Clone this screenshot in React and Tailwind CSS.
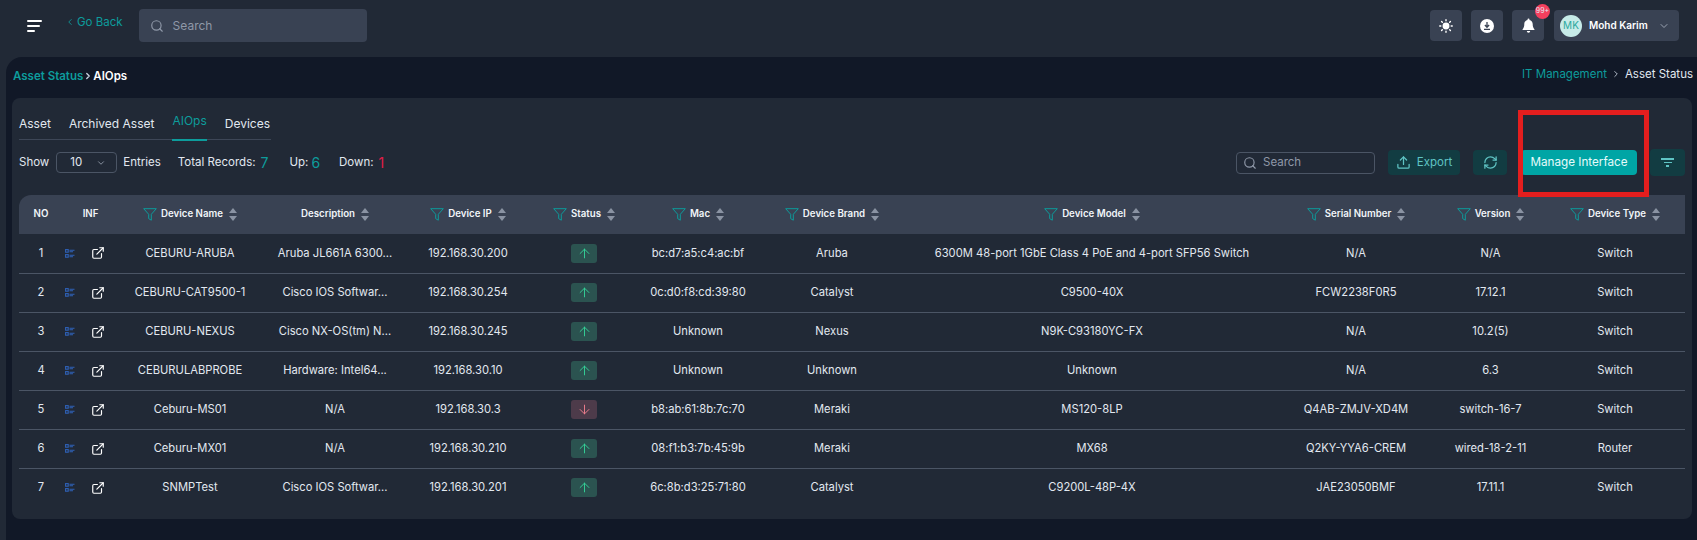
import { useState } from 'react';
import { ChevronDown, ChevronLeft, ChevronRight, Search, Upload, RefreshCw, ExternalLink, ArrowUp, ArrowDown } from 'lucide-react';

const columns = [
  { label: 'NO', w: 'w-[44px]' },
  { label: 'INF', w: 'w-[55px]' },
  { label: 'Device Name', w: 'w-[144px]', filter: true, sort: true },
  { label: 'Description', w: 'w-[146px]', sort: true },
  { label: 'Device IP', w: 'w-[120px]', filter: true, sort: true },
  { label: 'Status', w: 'w-[112px]', filter: true, sort: true },
  { label: 'Mac', w: 'w-[116px]', filter: true, sort: true },
  { label: 'Device Brand', w: 'w-[152px]', filter: true, sort: true },
  { label: 'Device Model', w: 'w-[368px]', filter: true, sort: true },
  { label: 'Serial Number', w: 'w-[160px]', filter: true, sort: true },
  { label: 'Version', w: 'w-[109px]', filter: true, sort: true },
  { label: 'Device Type', w: 'w-[140px]', filter: true, sort: true },
];

const devices = [
  ['CEBURU-ARUBA', 'Aruba JL661A 6300...', '192.168.30.200', true, 'bc:d7:a5:c4:ac:bf', 'Aruba', '6300M 48-port 1GbE Class 4 PoE and 4-port SFP56 Switch', 'N/A', 'N/A', 'Switch'],
  ['CEBURU-CAT9500-1', 'Cisco IOS Softwar...', '192.168.30.254', true, '0c:d0:f8:cd:39:80', 'Catalyst', 'C9500-40X', 'FCW2238F0R5', '17.12.1', 'Switch'],
  ['CEBURU-NEXUS', 'Cisco NX-OS(tm) N...', '192.168.30.245', true, 'Unknown', 'Nexus', 'N9K-C93180YC-FX', 'N/A', '10.2(5)', 'Switch'],
  ['CEBURULABPROBE', 'Hardware: Intel64...', '192.168.30.10', true, 'Unknown', 'Unknown', 'Unknown', 'N/A', '6.3', 'Switch'],
  ['Ceburu-MS01', 'N/A', '192.168.30.3', false, 'b8:ab:61:8b:7c:70', 'Meraki', 'MS120-8LP', 'Q4AB-ZMJV-XD4M', 'switch-16-7', 'Switch'],
  ['Ceburu-MX01', 'N/A', '192.168.30.210', true, '08:f1:b3:7b:45:9b', 'Meraki', 'MX68', 'Q2KY-YYA6-CREM', 'wired-18-2-11', 'Router'],
  ['SNMPTest', 'Cisco IOS Softwar...', '192.168.30.201', true, '6c:8b:d3:25:71:80', 'Catalyst', 'C9200L-48P-4X', 'JAE23050BMF', '17.11.1', 'Switch'],
];

function FunnelIcon() {
  return (
    <svg width="14" height="13" viewBox="0 0 14 13" fill="none" stroke="#0d9c9c" strokeWidth="1" className="shrink-0">
      <path d="M0.7 0.7h12.6L8.300 6.300v5.900L5.700 10.600V6.300z" strokeLinejoin="round" />
    </svg>
  );
}

function SortIcon() {
  return (
    <svg width="8" height="13" viewBox="0 0 8 13" fill="#8a93a3" className="ml-[2px] shrink-0">
      <path d="M4 0l4 5H0z" />
      <path d="M4 13L0 8h8z" />
    </svg>
  );
}

function ListIcon() {
  return (
    <svg width="10" height="9" viewBox="0 0 10 9" fill="none" stroke="#2f62b8" strokeWidth="1.1">
      <rect x="0.6" y="0.6" width="2.6" height="2.6" />
      <rect x="0.6" y="5.6" width="2.6" height="2.6" />
      <path d="M4.500 1.200h5M4.500 2.800h3.500M4.500 6.200h5M4.500 7.800h3.500" />
    </svg>
  );
}

function SunIcon() {
  return (
    <svg width="14" height="14" viewBox="0 0 13 13" fill="#fff" stroke="#fff" strokeWidth="1.3" strokeLinecap="round">
      <circle cx="6.500" cy="6.500" r="3.200" stroke="none" />
      <path d="M6.500 0.700v1M6.500 11.300v1M0.700 6.500h1M11.300 6.500h1M2.400 2.400l.7.7M9.900 9.900l.7.7M2.400 10.600l.7-.7M9.900 3.100l.7-.7" />
    </svg>
  );
}

function DownloadIcon() {
  return (
    <svg width="14" height="14" viewBox="0 0 14 14">
      <circle cx="7" cy="7" r="7" fill="#fff" />
      <path d="M7 3v5M4.900 6l2.100 2.200L9.100 6M4 10.300h6" fill="none" stroke="#394253" strokeWidth="1.300" />
    </svg>
  );
}

function BellIcon() {
  return (
    <svg width="13" height="15" viewBox="0 0 13 15" fill="#fff">
      <path d="M6.500 0.500a1 1 0 0 1 1 1v.4c2 .5 3.200 2.200 3.200 4.200 0 2.600.5 3.900 1.800 5.300v.6H.500v-.6c1.300-1.400 1.800-2.700 1.800-5.300 0-2 1.200-3.700 3.200-4.200v-.4a1 1 0 0 1 1-1z" />
      <path d="M4.800 13h3.400a1.700 1.700 0 0 1-3.400 0z" />
    </svg>
  );
}

function App() {
  const [activeTab, setActiveTab] = useState('AIOps');
  const tabs = ['Asset', 'Archived Asset', 'AIOps', 'Devices'];

  return (
    <div className="relative h-[540px] w-[1697px] overflow-hidden bg-[#212936] font-['Inter',sans-serif] text-[#e2e8f0]">
      {/* Top bar */}
      <header className="flex h-[57px] items-start">
        <button className="ml-[27px] mt-[20px] flex w-[16px] flex-col gap-[3px]">
          <span className="h-[2px] w-[15px] rounded bg-white" />
          <span className="h-[2px] w-[13px] rounded bg-white" />
          <span className="h-[2px] w-[8px] rounded bg-white" />
        </button>
        <a className="ml-[22px] mt-[14px] flex items-center gap-[2px] text-[11.500px] leading-[16px] text-[#0d9c9c]">
          <ChevronLeft size={10} />
          Go Back
        </a>
        <div className="ml-[16px] mt-[9px] flex h-[33px] w-[228px] items-center gap-[9px] rounded bg-[#394253] pl-[11px] text-[12px] text-[#8f98a8]">
          <Search size={14} />
          Search
        </div>
        <div className="ml-auto mr-[18px] mt-[10px] flex items-center">
          <button className="flex h-[31px] w-[32px] items-center justify-center rounded bg-[#394253]"><SunIcon /></button>
          <button className="ml-[9px] flex h-[31px] w-[32px] items-center justify-center rounded bg-[#394253]"><DownloadIcon /></button>
          <button className="relative ml-[9px] flex h-[31px] w-[32px] items-center justify-center rounded bg-[#394253]">
            <BellIcon />
            <span className="absolute left-[23px] top-[-6px] flex h-[15px] w-[15px] items-center justify-center rounded-full bg-[#f43f5e] text-[7px] text-[#e2e8f0]">99+</span>
          </button>
          <div className="ml-[10px] flex h-[31px] w-[125px] items-center rounded bg-[#394253] pl-[6px]">
            <span className="flex h-[22px] w-[22px] items-center justify-center rounded-full bg-[#c7ebe8] text-[10px] text-[#2ba8a0]">MK</span>
            <span className="ml-[7px] text-[10px] font-semibold text-white">Mohd Karim</span>
            <ChevronDown size={12} className="ml-[10px] text-[#9aa3b2]" />
          </div>
        </div>
      </header>

      {/* Page body */}
      <main className="ml-[6px] h-[483px] rounded-tl-[16px] bg-[#111827] pl-[6px] pr-[5px]">
        <div className="flex h-[41px] items-start justify-between pl-[1px]">
          <div className="mt-[11px] flex items-center text-[11.500px] font-semibold leading-[16px]">
            <span className="text-[#0d9c9c]">Asset Status</span>
            <ChevronRight size={10} strokeWidth={3} className="text-[#cbd5e1]" />
            <span className="text-white">AIOps</span>
          </div>
          <div className="mr-[-1px] mt-[9px] flex items-center gap-[4px] text-[11.500px] leading-[16px]">
            <span className="text-[#0d9c9c]">IT Management</span>
            <ChevronRight size={10} className="text-[#cbd5e1]" />
            <span className="text-[#e2e8f0]">Asset Status</span>
          </div>
        </div>

        <section className="h-[421px] rounded-lg bg-[#212936] px-[7px]">
          {/* Tabs */}
          <div className="flex h-[42px] w-[252px] items-end gap-[18px] border-b border-[#3d4657] text-[12px] text-[#e2e8f0]">
            {tabs.map((tab) => (
              <button
                key={tab}
                onClick={() => setActiveTab(tab)}
                className={tab === activeTab
                  ? 'mb-[-2px] h-[32px] shrink-0 whitespace-nowrap border-b-2 border-[#0d9c9c] pb-[7px] text-[#0d9c9c]'
                  : 'mb-[-1px] h-[32px] shrink-0 whitespace-nowrap'}
              >
                {tab}
              </button>
            ))}
          </div>

          {/* Toolbar */}
          <div className="mt-[9px] flex h-[27px] items-center text-[11.500px]">
            <span>Show</span>
            <div className="ml-[7px] flex h-[21px] w-[61px] items-center justify-between rounded border border-[#4b5565] pl-[13px] pr-[10px]">
              10 <ChevronDown size={10} className="text-[#9aa3b2]" />
            </div>
            <span className="ml-[6px]">Entries</span>
            <span className="ml-[17px]">Total Records:</span>
            <span className="ml-[5px] text-[14px] text-[#0d9c9c]">7</span>
            <span className="ml-[21px]">Up:</span>
            <span className="ml-[3px] text-[14px] text-[#0d9c9c]">6</span>
            <span className="ml-[19px]">Down:</span>
            <span className="ml-[5px] text-[14px] text-[#e11d48]">1</span>

            <div className="ml-auto flex items-center">
              <div className="flex h-[22px] w-[139px] items-center gap-[6px] rounded border border-[#4b5565] pl-[6px] text-[11.500px] text-[#8f98a8]">
                <Search size={14} />
                Search
              </div>
              <button className="ml-[13px] flex h-[25px] w-[72px] items-center justify-center gap-[6px] rounded bg-[#123c42] text-[11.500px] text-[#5fc4c4]">
                <Upload size={15} />
                Export
              </button>
              <button className="ml-[13px] flex h-[25px] w-[34px] items-center justify-center rounded bg-[#123c42] text-[#5fc4c4]">
                <RefreshCw size={15} />
              </button>
              <button className="ml-[14px] h-[25px] w-[116px] rounded bg-[#00a5a5] text-[11.700px] text-[#e6fbfb]">
                Manage Interface
              </button>
              <button className="ml-[13px] flex h-[27px] w-[35px] flex-col items-center justify-center gap-[2px] rounded bg-[#123c42]">
                <span className="h-[1.500px] w-[13px] bg-[#5fc4c4]" />
                <span className="h-[1.500px] w-[8px] bg-[#5fc4c4]" />
                <span className="h-[1.500px] w-[3px] bg-[#5fc4c4]" />
              </button>
            </div>
          </div>

          {/* Table */}
          <table className="mt-[19px] w-[1666px] table-fixed border-collapse text-center">
            <colgroup>
              {columns.map((col) => <col key={col.label} className={col.w} />)}
            </colgroup>
            <thead>
              <tr className="h-[39px] bg-[#394253] text-[9.700px] font-semibold text-[#f1f5f9]">
                {columns.map((col, i) => (
                  <th key={col.label} className={i === 0 ? 'rounded-tl-[12px] p-0 font-semibold' : 'p-0 font-semibold'}>
                    <span className="flex items-center justify-center gap-[4px]">
                      {col.filter && <FunnelIcon />}
                      {col.label}
                      {col.sort && <SortIcon />}
                    </span>
                  </th>
                ))}
              </tr>
            </thead>
            <tbody className="text-[11.200px] text-[#e2e8f0]">
              {devices.map((d, i) => (
                <tr key={d[0]} className={i < devices.length - 1 ? 'h-[39px] border-b border-[#4b5565]' : 'h-[39px]'}>
                  <td className="p-0">{i + 1}</td>
                  <td className="p-0">
                    <span className="flex items-center gap-[16px] pl-[2px]">
                      <ListIcon />
                      <ExternalLink size={14} className="text-white" strokeWidth={2} />
                    </span>
                  </td>
                  <td className="p-0">{d[0]}</td>
                  <td className="p-0">{d[1]}</td>
                  <td className="p-0">{d[2]}</td>
                  <td className="p-0">
                    {d[3] ? (
                      <span className="inline-flex h-[19px] w-[26px] items-center justify-center rounded-[3px] bg-[#2b5350] align-middle text-[#34d399]">
                        <ArrowUp size={15} strokeWidth={1.500} />
                      </span>
                    ) : (
                      <span className="inline-flex h-[19px] w-[26px] items-center justify-center rounded-[3px] bg-[#4d3b4a] align-middle text-[#f1808f]">
                        <ArrowDown size={15} strokeWidth={1.500} />
                      </span>
                    )}
                  </td>
                  <td className="p-0">{d[4]}</td>
                  <td className="p-0">{d[5]}</td>
                  <td className="p-0">{d[6]}</td>
                  <td className="p-0">{d[7]}</td>
                  <td className="p-0">{d[8]}</td>
                  <td className="p-0">{d[9]}</td>
                </tr>
              ))}
            </tbody>
          </table>
        </section>
      </main>

      {/* Red annotation box drawn over the screenshot */}
      <div className="pointer-events-none absolute left-[1518px] top-[110px] h-[87px] w-[131px] border-[5px] border-[#e41e1e]" />
    </div>
  );
}

export default App;
